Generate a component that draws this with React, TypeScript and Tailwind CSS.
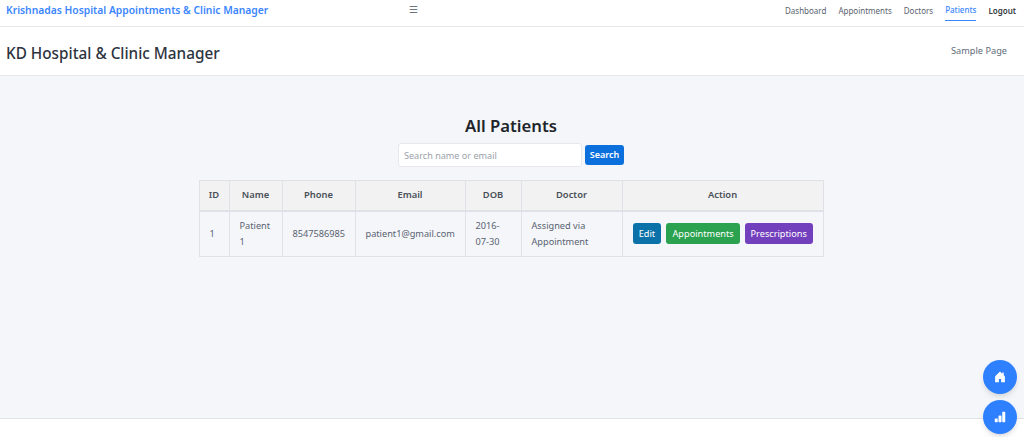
import { BsHouseDoorFill, BsBarChartFill } from 'react-icons/bs'

const navLinks = ['Dashboard', 'Appointments', 'Doctors']
const headers = [
  { label: 'ID', width: 'w-[30px]' },
  { label: 'Name', width: 'w-[53px]' },
  { label: 'Phone', width: 'w-[73px]' },
  { label: 'Email', width: 'w-[110px]' },
  { label: 'DOB', width: 'w-[56px]' },
  { label: 'Doctor', width: 'w-[101px]' },
  { label: 'Action', width: 'w-[201px]' },
]

const cell = 'border border-[#dee2e6] px-[10px] text-[9.2px] leading-[16px] text-[#5a6370] font-normal align-middle'

export default function App() {
  return (
    <div className="relative flex h-[437px] flex-col overflow-hidden bg-[#f4f6fa] font-['Noto_Sans',sans-serif]">
      <nav className="flex h-[27px] shrink-0 items-start border-b border-[#e6e8eb] bg-white pl-[6px] pr-[8px]">
        <a className="flex h-[21px] w-[403px] items-center text-[10.3px] font-semibold text-[#3b86ff]">Krishnadas Hospital Appointments &amp; Clinic Manager</a>
        <button className="flex h-[18px] items-center text-[10px] leading-none text-[#6c757d]">☰</button>
        <div className="ml-auto flex items-start gap-[12px] text-[8px]">
          {navLinks.map((link) => (
            <a key={link} className="flex h-[21px] items-center text-[#5a6370]">{link}</a>
          ))}
          <a className="flex h-[21px] items-center border-b border-[#3b86ff] font-medium text-[#3b86ff]">Patients</a>
          <a className="flex h-[21px] items-center font-semibold text-[#343a40]">Logout</a>
        </div>
      </nav>

      <header className="flex h-[49px] shrink-0 items-center justify-between border-b border-[#e6e8eb] bg-white pl-[6px] pr-[17px]">
        <h1 className="pt-[4px] text-[15.3px] font-medium text-[#2d3440]">KD Hospital &amp; Clinic Manager</h1>
        <span className="text-[9.2px] text-[#5f6b7a]">Sample Page</span>
      </header>

      <main className="flex flex-1 flex-col items-center pr-[2px] pt-[38px]">
        <h2 className="text-[16.7px] font-semibold leading-[24px] text-[#212529]">All Patients</h2>
        <form className="mt-[5px] flex items-center gap-[3px]">
          <input
            placeholder="Search name or email"
            className="h-[24px] w-[184px] rounded-[3px] border border-[#e6e8ee] bg-white px-[5px] text-[9.1px] placeholder:text-[#9aa1a9]"
          />
          <button type="button" className="h-[20px] w-[39px] rounded-[3px] bg-[#0b6fdc] text-[9px] font-semibold text-white">Search</button>
        </form>
        <table className="mt-[13px] w-[624px] table-fixed border-collapse">
          <thead>
            <tr className="h-[30px] bg-[#f2f2f3]">
              {headers.map((h) => (
                <th key={h.label} className={`${h.width} border border-b-2 border-[#dee2e6] text-center text-[9.4px] font-semibold text-[#495057]`}>{h.label}</th>
              ))}
            </tr>
          </thead>
          <tbody>
            <tr className="h-[46px]">
              <td className={cell}>1</td>
              <td className={cell}>Patient 1</td>
              <td className={cell}>8547586985</td>
              <td className={cell}>patient1@gmail.com</td>
              <td className={cell}>2016-07-30</td>
              <td className={cell}>Assigned via Appointment</td>
              <td className={cell}>
                <div className="flex gap-[5px] text-[9.2px] text-white">
                  <a className="flex h-[21px] w-[29px] items-center justify-center rounded-[3px] bg-[#0a72a8]">Edit</a>
                  <a className="flex h-[21px] w-[74px] items-center justify-center rounded-[3px] bg-[#2aa24f]">Appointments</a>
                  <a className="flex h-[21px] w-[68px] items-center justify-center rounded-[3px] bg-[#7340bd]">Prescriptions</a>
                </div>
              </td>
            </tr>
          </tbody>
        </table>
      </main>

      <footer className="h-[19px] shrink-0 border-t border-[#dfe2e6] bg-white" />

      <div className="absolute right-[7px] top-[360px] flex flex-col gap-[6px]">
        <button className="flex h-[34px] w-[34px] items-center justify-center rounded-full bg-[#2e80ff] text-white shadow-md">
          <BsHouseDoorFill className="h-[12px] w-[12px]" />
        </button>
        <button className="flex h-[34px] w-[34px] items-center justify-center rounded-full bg-[#2e80ff] text-white shadow-md">
          <BsBarChartFill className="h-[12px] w-[12px]" />
        </button>
      </div>
    </div>
  )
}
